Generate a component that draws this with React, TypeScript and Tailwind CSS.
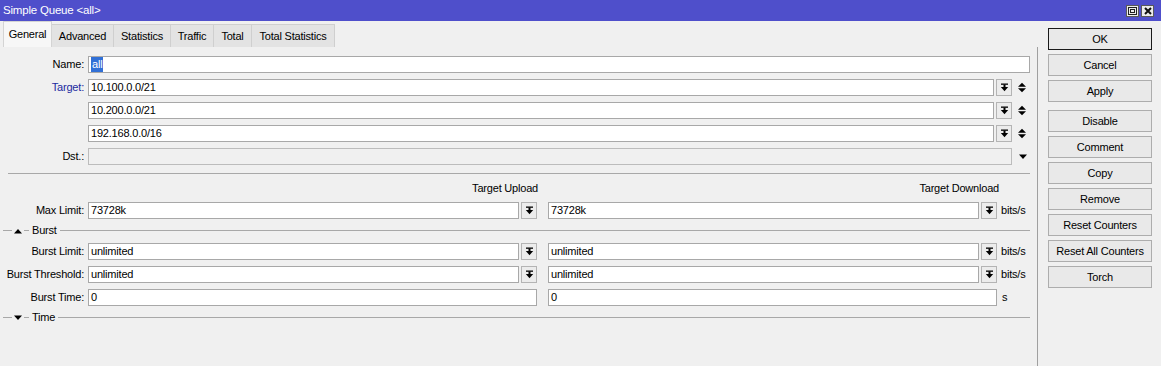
import React from "react";

function DropIcon() {
  return (
    <svg width="9" height="9" viewBox="0 0 9 9">
      <rect x="1" y="0.5" width="7" height="1.3" fill="#000" />
      <rect x="3.5" y="1.5" width="2" height="2.5" fill="#000" />
      <path d="M0.8 4 H8.2 L4.5 8.3 Z" fill="#000" />
    </svg>
  );
}

function DropBtn() {
  return (
    <div className="w-[16px] h-[17px] shrink-0 border border-[#b4b4b4] bg-[#ececec] flex items-center justify-center">
      <DropIcon />
    </div>
  );
}

function UpDown() {
  return (
    <svg width="10" height="11" viewBox="0 0 10 11">
      <path d="M1 4.8 L5 0.8 L9 4.8 Z" fill="#000" />
      <path d="M1 6.2 L5 10.2 L9 6.2 Z" fill="#000" />
    </svg>
  );
}

function DownArrow() {
  return (
    <svg width="10" height="6" viewBox="0 0 10 6">
      <path d="M1 0.5 L9 0.5 L5 5 Z" fill="#000" />
    </svg>
  );
}

function UpTri() {
  return (
    <svg width="10" height="6" viewBox="0 0 10 6">
      <path d="M1 5.5 L9 5.5 L5 1 Z" fill="#000" />
    </svg>
  );
}

function Input({ children, disabled }: { children?: React.ReactNode; disabled?: boolean }) {
  return (
    <div
      className={
        "flex-1 min-w-0 h-[17px] border flex items-center pl-[2px] whitespace-nowrap overflow-hidden " +
        (disabled ? "bg-[#f0f0f0] border-[#bcbcbc]" : "bg-white border-[#a8a8a8]")
      }
    >
      {children}
    </div>
  );
}

function Label({ children, blue }: { children: React.ReactNode; blue?: boolean }) {
  return (
    <div className={"w-[88px] shrink-0 pr-[4px] text-right whitespace-nowrap " + (blue ? "text-[#1c2aa0]" : "text-black")}>
      {children}
    </div>
  );
}

function Section({ title, open }: { title: string; open?: boolean }) {
  return (
    <div className="flex items-center h-[13px] pl-[3px] pr-[7px]">
      <div className="w-[9px] h-px bg-[#a8a8a8]" />
      <div className="ml-[1px] w-[10px] flex items-center justify-center">{open ? <UpTri /> : <DownArrow />}</div>
      <div className="ml-px w-[5px] h-px bg-[#a8a8a8]" />
      <div className="ml-[3px] whitespace-nowrap">{title}</div>
      <div className="ml-[3px] flex-1 h-px bg-[#a8a8a8]" />
    </div>
  );
}

function LimitRow({ label, up, down, unit, noBtn }: { label: string; up: string; down: string; unit: string; noBtn?: boolean }) {
  return (
    <div className="flex items-center h-[17px]">
      <Label>{label}</Label>
      <div className="flex-1 flex items-center gap-[2px]">
        <Input>{up}</Input>
        {!noBtn && <DropBtn />}
      </div>
      <div className="w-[11px] shrink-0" />
      <div className="flex-1 flex items-center gap-[2px]">
        <Input>{down}</Input>
        {!noBtn && <DropBtn />}
      </div>
      <div className={"w-[33px] shrink-0 whitespace-nowrap " + (noBtn ? "pl-[5px]" : "pl-[4px]")}>{unit}</div>
    </div>
  );
}

function Btn({ children, focused }: { children: React.ReactNode; focused?: boolean }) {
  return (
    <div
      className={
        "w-[104px] h-[22px] flex items-center justify-center bg-[#e9e9e9] border " +
        (focused ? "border-[#1a1a1a]" : "border-[#adadad]")
      }
    >
      {children}
    </div>
  );
}

export default function App() {
  const tabs = [
    { t: "General", w: "w-[49px]" },
    { t: "Advanced", w: "w-[62px]" },
    { t: "Statistics", w: "w-[57px]" },
    { t: "Traffic", w: "w-[43px]" },
    { t: "Total", w: "w-[38px]" },
    { t: "Total Statistics", w: "w-[83px]" },
  ];
  return (
    <div className="w-[1161px] h-[366px] bg-[#f0f0f0] text-[11px] tracking-[-0.2px] text-black font-['Liberation_Sans',Arial,sans-serif] flex flex-col overflow-hidden">
      {/* title bar */}
      <div className="h-[21px] shrink-0 bg-[#4f4fcb] flex items-center pl-[3px] pr-[7px]">
        <div className="text-white flex-1 text-[11.5px]">Simple Queue &lt;all&gt;</div>
        <div className="flex items-center gap-[2px]">
          <div className="w-[13px] h-[12px] bg-[#ececec] border border-[#5a5a5a] flex items-center justify-center">
            <svg width="9" height="8" viewBox="0 0 9 8">
              <rect x="0.5" y="0.5" width="8" height="7" fill="none" stroke="#222" strokeWidth="1" />
              <rect x="2.5" y="2.5" width="4" height="3" fill="none" stroke="#222" strokeWidth="1" />
            </svg>
          </div>
          <div className="w-[13px] h-[12px] bg-[#ececec] border border-[#5a5a5a] flex items-center justify-center">
            <svg width="8" height="8" viewBox="0 0 8 8">
              <path d="M1 1 L7 7 M7 1 L1 7" stroke="#111" strokeWidth="2" />
            </svg>
          </div>
        </div>
      </div>

      <div className="flex flex-1 min-h-0">
        {/* left */}
        <div className="w-[1038px] shrink-0 flex flex-col">
          {/* tabs */}
          <div className="h-[26px] shrink-0 flex items-end pl-[3px]">
            {tabs.map((tab, i) =>
              i === 0 ? (
                <div
                  key={tab.t}
                  className={tab.w + " h-[26px] bg-[#f7f7f7] border-l border-t border-r border-[#d4d4d4] flex items-center justify-center pb-[1px]"}
                >
                  {tab.t}
                </div>
              ) : (
                <div
                  key={tab.t}
                  className={tab.w + " h-[23px] bg-[#e3e3e3] border-t border-r border-[#cfcfcf] flex items-center justify-center"}
                >
                  {tab.t}
                </div>
              )
            )}
          </div>

          <div className="flex-1 border-r border-[#a0a0a0] flex flex-col pt-[9px]">
            <div className="flex flex-col gap-[6px] pr-[7px]">
              <div className="flex items-center h-[17px]">
                <Label>Name:</Label>
                <Input>
                  <span className="bg-[#3170d6] text-white px-px">all</span>
                </Input>
              </div>
              {["10.100.0.0/21", "10.200.0.0/21", "192.168.0.0/16"].map((v, i) => (
                <div key={v} className="flex items-center h-[17px]">
                  <Label blue={i === 0}>{i === 0 ? "Target:" : ""}</Label>
                  <Input>{v}</Input>
                  <div className="ml-[2px]">
                    <DropBtn />
                  </div>
                  <div className="w-[18px] shrink-0 flex justify-center pl-[2px]">
                    <UpDown />
                  </div>
                </div>
              ))}
              <div className="flex items-center h-[17px]">
                <Label>Dst.:</Label>
                <Input disabled />
                <div className="w-[18px] shrink-0 flex justify-center pl-[3px]">
                  <DownArrow />
                </div>
              </div>
            </div>

            <div className="mt-[8px] ml-[8px] mr-[7px] h-px bg-[#a8a8a8]" />

            <div className="mt-[7px] h-[14px] flex items-center pr-[7px]">
              <div className="w-[88px] shrink-0" />
              <div className="flex-1 text-right -mr-[2px]">Target Upload</div>
              <div className="w-[13px] shrink-0" />
              <div className="flex-1 text-right">Target Download</div>
              <div className="w-[31px] shrink-0" />
            </div>

            <div className="mt-[7px] pr-[7px]">
              <LimitRow label="Max Limit:" up="73728k" down="73728k" unit="bits/s" />
            </div>

            <div className="mt-[5px]">
              <Section title="Burst" open />
            </div>

            <div className="mt-[6px] flex flex-col gap-[6px] pr-[7px]">
              <LimitRow label="Burst Limit:" up="unlimited" down="unlimited" unit="bits/s" />
              <LimitRow label="Burst Threshold:" up="unlimited" down="unlimited" unit="bits/s" />
              <LimitRow label="Burst Time:" up="0" down="0" unit="s" noBtn />
            </div>

            <div className="mt-[5px]">
              <Section title="Time" />
            </div>
          </div>
        </div>

        {/* right */}
        <div className="flex-1 pl-[10px] pt-[7px] flex flex-col gap-[4px]">
          <Btn focused>OK</Btn>
          <Btn>Cancel</Btn>
          <Btn>Apply</Btn>
          <div className="mt-[4px]">
            <Btn>Disable</Btn>
          </div>
          <Btn>Comment</Btn>
          <Btn>Copy</Btn>
          <Btn>Remove</Btn>
          <Btn>Reset Counters</Btn>
          <Btn>Reset All Counters</Btn>
          <Btn>Torch</Btn>
        </div>
      </div>
    </div>
  );
}
